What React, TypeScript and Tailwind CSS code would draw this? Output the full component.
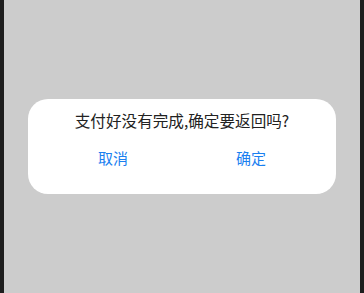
import React from 'react';

export default function App() {
  return (
    <div className="h-[293px] w-full bg-[#1e1e1e] px-[4px]">
      <div className="flex h-full items-center justify-center bg-[#cccccc] px-[24px]">
        <div
          className="w-full rounded-[20px] bg-white px-4 pt-[9px] pb-[16px]"
          style={{ fontFamily: '"Noto Sans CJK SC", "Noto Sans", sans-serif' }}
        >
          <p className="text-center text-[15.6px] leading-6 text-[#222222]">
            支付好没有完成,确定要返回吗?
          </p>
          <div className="mt-[6px] flex">
            <button className="h-10 flex-1 text-[15px] text-[#1a80f0]">取消</button>
            <button className="h-10 flex-1 text-[15px] text-[#1a80f0]">确定</button>
          </div>
        </div>
      </div>
    </div>
  );
}
